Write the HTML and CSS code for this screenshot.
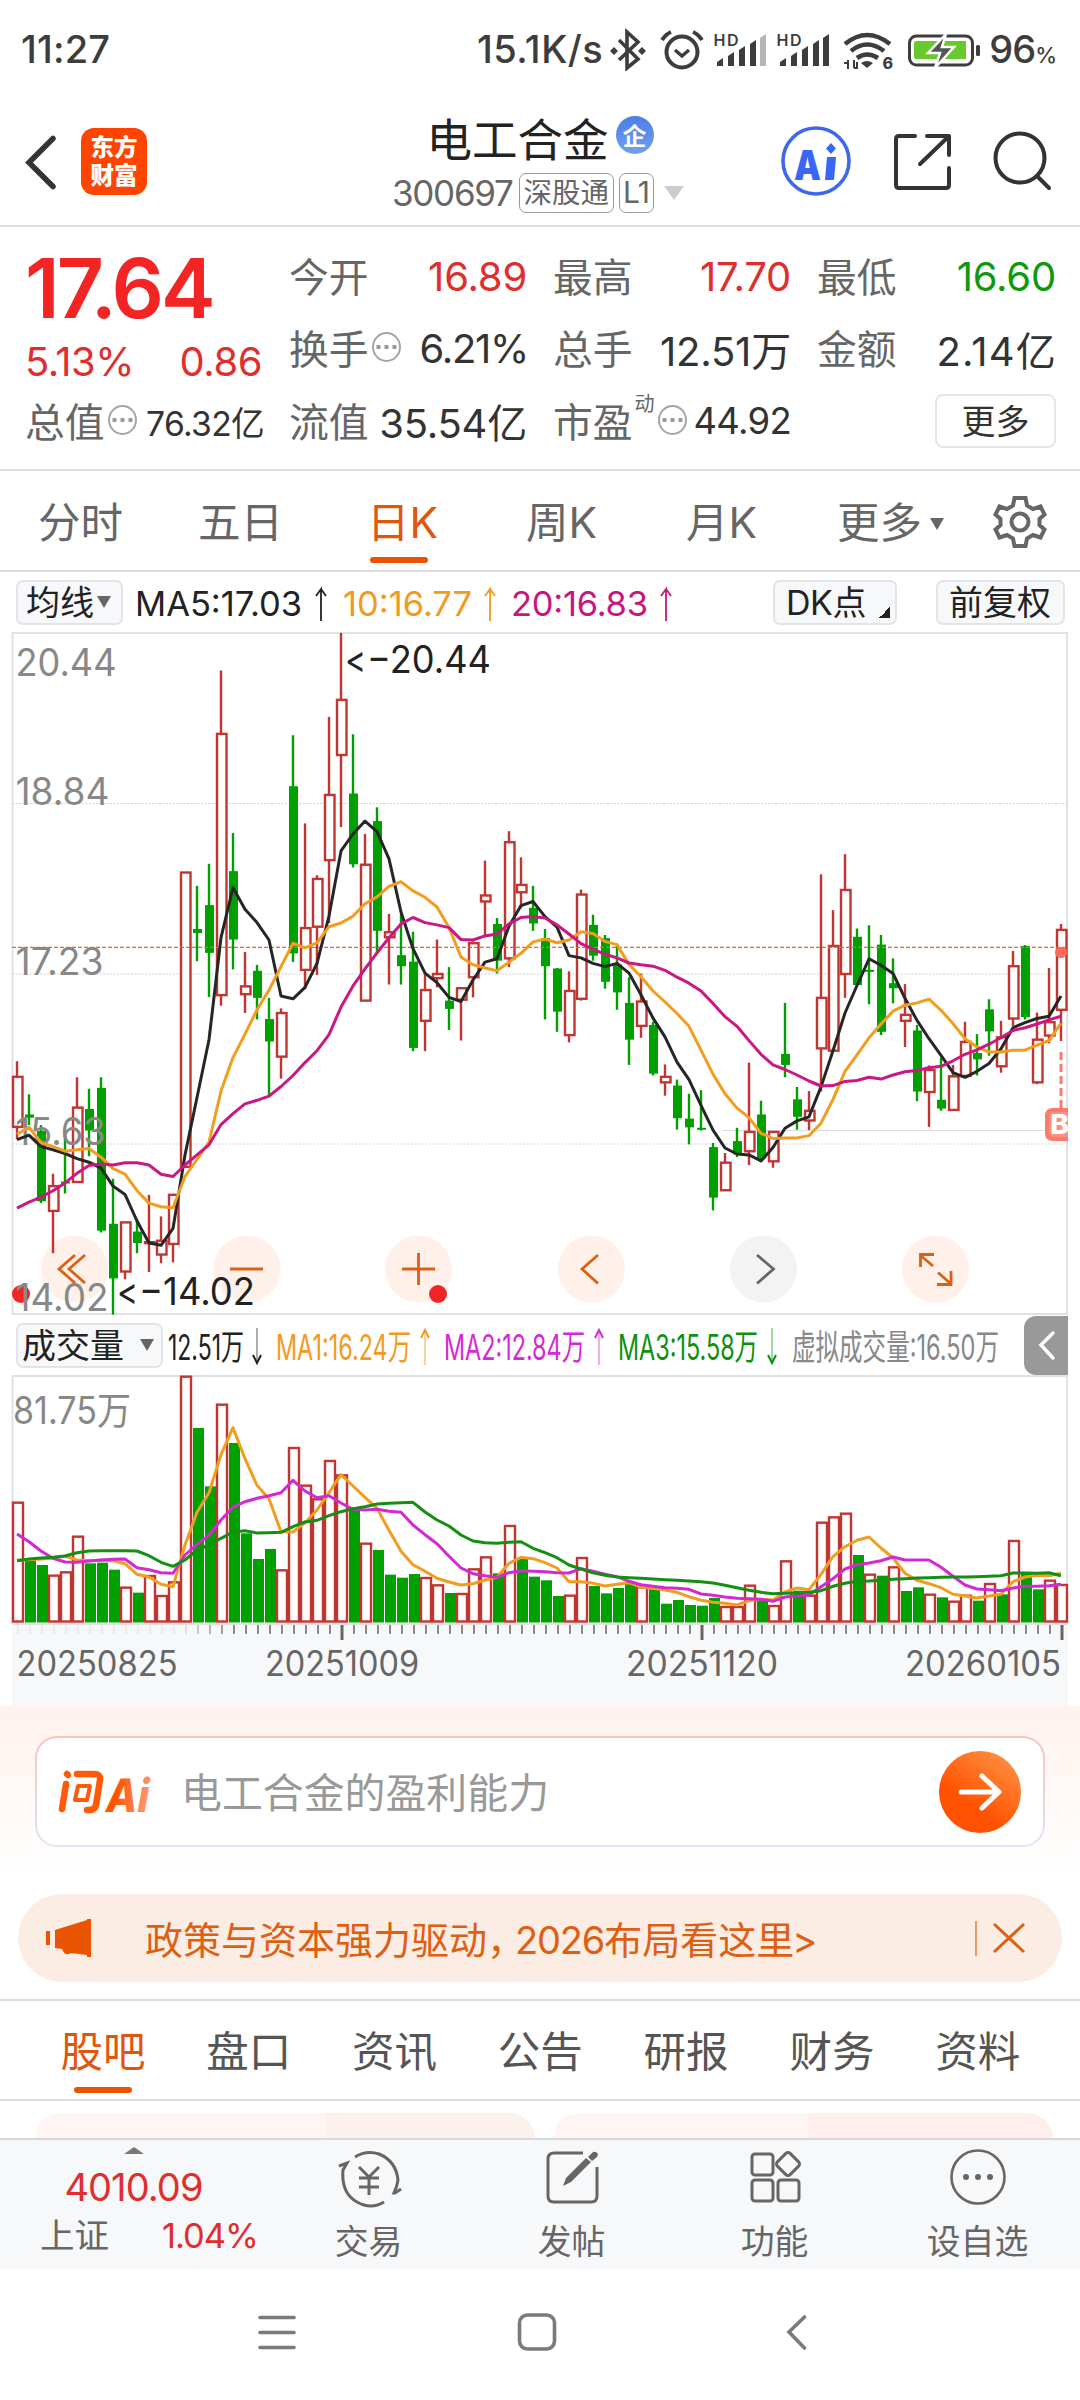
FILE: index.html
```html
<!DOCTYPE html>
<html lang="zh-CN">
<head>
<meta charset="utf-8">
<title>电工合金 300697</title>
<link rel="stylesheet" href="styles.css">
</head>
<body>
<div class="status">
  <span class="time">11:27</span>
  <span class="speed">15.1K/s</span>
  <svg class="status-icons" width="372" height="44" viewBox="610 25 372 44" fill="none" stroke="#3d3d3d">
    <path d="M619 38L638 57L627 66V30L638 40L619 58" stroke-width="3.6"/>
    <path d="M610 49l4-4l4 4l-4 4zM638 49l4-4l4 4l-4 4z" fill="#3d3d3d" stroke="none"/>
    <circle cx="682" cy="50" r="15.5" stroke-width="4"/>
    <path d="M675 48l7 6l7-6" stroke-width="3.4"/>
    <path d="M662 38q4-6 9-8M702 38q-4-6-9-8" stroke-width="4"/>
    <g fill="#3d3d3d" stroke="none">
      <text class="hd" x="713.5" y="43.5" textLength="25">HD</text>
      <text class="hd" x="776.5" y="43.5" textLength="25">HD</text>
      <path d="M717 64v-4l6-4v8zM728 64V54l6-4v14zM739 64V48l6-4v20zM750 64V42l6-4v26z"/>
      <path d="M760 64V36l6-4v32z" fill="#b5b5b5"/>
      <path d="M780 64v-4l6-4v8zM791 64V54l6-4v14zM802 64V48l6-4v20zM813 64V42l6-4v26zM823 64V36l6-4v32z"/>
      <path d="M867 66l-6-5q6-4 12 0z"/>
      <text class="six" x="882.5" y="67">6</text>
    </g>
    <path d="M845 42q22-18 45 0M851 49q16-13 33 0M857 56q10-7 21 0" stroke-width="4.6"/>
    <path d="M844 61h4V58M848 58v9M854 66v-8M854 66h3M857 60v7" stroke-width="2"/>
    <rect x="909.500" y="34" width="63" height="29" rx="7" stroke-width="3"/>
    <path d="M914 41q0-2 2-2h50v18h-50q-2 0-2-2z" fill="#67c92b" stroke="none"/>
    <path d="M946 32L928 51h12l-5 15L954 45H942z" fill="#555" stroke="#fff" stroke-width="2.500"/>
    <rect x="976" y="43" width="4" height="11" rx="1.500" fill="#3d3d3d" stroke="none"/>
  </svg>
  <span class="battery">96<small>%</small></span>
</div>

<header class="header">
  <svg class="back" width="40" height="60" viewBox="20 131 40 60"><path d="M53 137.500L29 161.500L53 185.500" fill="none" stroke="#333" stroke-width="5.500" stroke-linecap="round"/></svg>
  <div class="brand">东方<br>财富</div>
  <div class="title">
    <div class="name">电工合金<i class="corp">企</i></div>
    <div class="code"><b>300697</b><span>深股通</span><span class="lv">L1</span><i class="caret"></i></div>
  </div>
  <svg class="actions" width="280" height="76" viewBox="775 123 280 76" fill="none" stroke="#333" stroke-width="4">
    <circle cx="816" cy="160" r="33" stroke="#3d68ea" stroke-width="3.600"/>
    <g fill="#3a66f5" stroke="none">
      <text class="ai-text" x="794" y="179" textLength="27" lengthAdjust="spacingAndGlyphs">A</text>
      <path d="M827 156h9l-2 23h-9zM831 142l5 5.500l-5 5.500l-5-5.500z"/>
    </g>
    <path d="M915 135h-16q-3 0-3 3v46q0 3 3 3h47q3 0 3-3v-17M927 135h22v19M947 137L920 163" stroke-linejoin="round" stroke-linecap="round"/>
    <circle cx="1020" cy="157" r="24.500"/><path d="M1037 175l12 12" stroke-linecap="round"/>
  </svg>
</header>

<section class="quote">
  <div class="last">
    <div class="price">17.64</div>
    <div class="pair red"><span>5.13%</span><span>0.86</span></div>
    <div class="cell"><label>总值</label><i class="dots"></i><em class="s34">76.32亿</em></div>
  </div>
  <div class="grid">
    <div class="cell"><label>今开</label><em class="red">16.89</em></div>
    <div class="cell"><label>最高</label><em class="red">17.70</em></div>
    <div class="cell"><label>最低</label><em class="green">16.60</em></div>
    <div class="cell"><label>换手</label><i class="dots"></i><em class="tight">6.21%</em></div>
    <div class="cell"><label>总手</label><em>12.51万</em></div>
    <div class="cell"><label>金额</label><em class="loose">2.14亿</em></div>
    <div class="cell"><label>流值</label><em>35.54亿</em></div>
    <div class="cell"><label>市盈</label><sup>动</sup><i class="dots"></i><em class="s36">44.92</em></div>
    <div class="cell end"><span class="more">更多</span></div>
  </div>
</section>

<nav class="periods">
  <span>分时</span><span>五日</span><span class="on">日K</span><span>周K</span><span>月K</span><span class="drop">更多<i></i></span>
  <svg width="54" height="56" viewBox="-27 -28 54 56" fill="none" stroke="#666" stroke-width="4">
    <path d="M-5.500-24h11l1.500 7.500l6 3.500l7.500-2.500l4 8l-5 4.500v6l5 4.500l-4 8l-7.500-2.500l-6 3.500l-1.500 7.500h-11l-1.500-7.500l-6-3.500l-7.500 2.500l-4-8l5-4.500v-6l-5-4.500l4-8l7.500 2.500l6-3.500z"/>
    <circle r="8.500"/>
  </svg>
</nav>

<div class="legend">
  <span class="chip avg">均线<i></i></span>
  <svg class="ma" width="550" height="60" viewBox="130 572 550 60">
    <g class="t35">
      <text x="135" y="616" textLength="167" fill="#222">MA5:17.03</text>
      <text x="343" y="616" textLength="129" fill="#f29a1d">10:16.77</text>
      <text x="511" y="616" textLength="137" fill="#c8157f">20:16.83</text>
    </g>
    <g fill="none" stroke-width="1.800">
      <path d="M321 621V589l-5 7M321 589l5 7" stroke="#222"/>
      <path d="M490 621V589l-5 7M490 589l5 7" stroke="#f29a1d"/>
      <path d="M666 621V589l-5 7M666 589l5 7" stroke="#c8157f"/>
    </g>
  </svg>
  <span class="chip dk">DK点<i></i></span>
  <span class="chip fq">前复权</span>
</div>

<svg class="chart" id="kline" width="1080" height="683" viewBox="0 632 1080 683"></svg>

<div class="legend vol-legend">
  <span class="chip vol">成交量<i></i></span>
  <svg width="846" height="60" viewBox="165 1315 846 60">
    <g class="t36">
      <text x="168" y="1360" textLength="76" lengthAdjust="spacingAndGlyphs" fill="#222">12.51万</text>
      <text x="276" y="1360" textLength="135" lengthAdjust="spacingAndGlyphs" fill="#f29a1d">MA1:16.24万</text>
      <text x="444" y="1360" textLength="141" lengthAdjust="spacingAndGlyphs" fill="#d529d5">MA2:12.84万</text>
      <text x="618" y="1360" textLength="140" lengthAdjust="spacingAndGlyphs" fill="#0d910d">MA3:15.58万</text>
      <text x="792" y="1360" textLength="207" lengthAdjust="spacingAndGlyphs" fill="#888">虚拟成交量:16.50万</text>
    </g>
    <g fill="none" stroke-width="1.200">
      <path d="M257 1328v35" stroke="#777"/><path d="M253 1355l4 8l4-8" stroke="#222" stroke-width="2"/>
      <path d="M425 1365v-35" stroke="#f5b65a"/><path d="M421 1338l4-8l4 8" stroke="#f29a1d" stroke-width="2"/>
      <path d="M599 1365v-35" stroke="#e37be3"/><path d="M595 1338l4-8l4 8" stroke="#d529d5" stroke-width="2"/>
      <path d="M772 1328v35" stroke="#66b866"/><path d="M768 1355l4 8l4-8" stroke="#0d910d" stroke-width="2"/>
    </g>
  </svg>
  <span class="fold"><svg width="44" height="59" viewBox="1024 1316 44 59"><path d="M1053 1333l-12 12l12 13" fill="none" stroke="#fff" stroke-width="3.500" stroke-linecap="round"/></svg></span>
</div>

<svg class="chart" id="volume" width="1080" height="331" viewBox="0 1375 1080 331"></svg>

<section class="ask">
  <div class="ask-box">
    <svg width="98" height="46" viewBox="57 1769 98 46" fill="none" stroke="#ff5a0a" stroke-width="6.500" stroke-linejoin="round" stroke-linecap="round">
      <defs><linearGradient id="fade" x1="0" y1="0" x2="1" y2="0"><stop offset=".2" stop-color="#ff5500"/><stop offset="1" stop-color="#ff9a72"/></linearGradient></defs>
      <path d="M66 1784L62 1809M67 1774l1 1M77 1774h17q7 0 6 6l-4 25q-1 5-7 5h-2"/>
      <path d="M78 1786h12l-3 14h-12z" stroke-width="4"/>
      <g transform="translate(104 1812) skewX(-10)"><text class="ask-ai" textLength="43" lengthAdjust="spacingAndGlyphs" x="0" y="0">Ai</text></g>
    </svg>
    <span class="hint">电工合金的盈利能力</span>
    <span class="go"><svg width="82" height="82" viewBox="-41 -41 82 82"><path d="M-19 0H18M2-16L19 0L2 16" fill="none" stroke="#fff" stroke-width="5" stroke-linecap="round" stroke-linejoin="round"/></svg></span>
  </div>
</section>

<div class="notice">
  <svg width="46" height="42" viewBox="46 1917 46 42" fill="#ea5504"><path d="M46 1931h4v14h-4zM55 1930L87 1920v-1h4v38h-4v-2l-16-2q-6 4-9-4l-7-1z"/></svg>
  <span class="notice-text">政策与资本强力驱动<span class="comma">，</span><span class="latin">2026</span>布局看这里<span class="gt">&gt;</span></span>
  <svg width="52" height="38" viewBox="975 1919 52 38" fill="none" stroke="#dd6014"><path d="M976 1921v35" stroke-width="1.200"/><path d="M994 1924l30 28M1024 1924l-30 28" stroke-width="3"/></svg>
</div>

<nav class="topics"><span class="on">股吧</span><span>盘口</span><span>资讯</span><span>公告</span><span>研报</span><span>财务</span><span>资料</span></nav>
<div class="cards"><i></i><i></i></div>

<footer class="dock">
  <div class="index">
    <i class="up"></i>
    <b>4010.09</b>
    <div class="idx-row"><label>上证</label><em>1.04%</em></div>
  </div>
  <div class="tool"><svg width="66" height="62" viewBox="336 2146 66 62" fill="none" stroke="#666" stroke-width="3"><path d="M355 2157q11-7 24-3q17 7 19 26q-1 7-4 13l1 0l6-4M384 2202q-13 8-27 0q-16-9-14-32l4-7l-8 3"/><path d="M359 2167l10 10l10-10M369 2177v18M359 2178h20M359 2187h20"/></svg>交易</div>
  <div class="tool"><svg width="66" height="62" viewBox="539 2146 66 62" fill="none" stroke="#666" stroke-width="3"><path d="M583 2153h-29q-6 0-6 6v37q0 6 6 6h37q6 0 6-6v-29"/><path d="M563 2186l3-8l20-20l5 4l-20 20zM588 2157l5-5q3-1 5 2l-1 3l-5 4z" fill="#666" stroke="none"/></svg>发帖</div>
  <div class="tool"><svg width="66" height="62" viewBox="742 2146 66 62" fill="none" stroke="#666" stroke-width="3"><rect x="752" y="2154" width="21" height="21" rx="3"/><rect x="752" y="2180" width="21" height="21" rx="3"/><rect x="778" y="2180" width="21" height="21" rx="3"/><rect x="779" y="2155" width="18" height="18" rx="3" transform="rotate(45 788 2164)"/></svg>功能</div>
  <div class="tool"><svg width="66" height="62" viewBox="945 2146 66 62" fill="none" stroke="#666" stroke-width="2.600"><circle cx="978" cy="2177" r="26.500"/><g fill="#666" stroke="none"><circle cx="966" cy="2177" r="3"/><circle cx="978" cy="2177" r="3"/><circle cx="990" cy="2177" r="3"/></g></svg>设自选</div>
</footer>

<svg class="sysnav" width="1080" height="130" viewBox="0 2270 1080 130" fill="none" stroke="#7a7a7a" stroke-width="3.600" stroke-linecap="round">
  <path d="M260 2317.500h34M260 2332.500h34M260 2347.500h34"/>
  <rect x="519.500" y="2315" width="35" height="34" rx="8"/>
  <path d="M804.500 2317L789 2332l15.500 16"/>
</svg>
<script src="chart.js"></script>
</body>
</html>
```
FILE: styles.css
```css
* { box-sizing: border-box; }
body {
  margin: 0;
  width: 1080px;
  height: 2400px;
  overflow: hidden;
  background: #fff;
  color: #333;
  font-family: Inter, "Noto Sans CJK SC", sans-serif;
  font-variant-ligatures: none;
  font-feature-settings: "calt" 0;
}
svg { display: block; flex: none; }
i, em { font-style: normal; }
.red { color: #e02d2d; }
.green { color: #0d980d; }

/* status bar */
.status { display: flex; align-items: center; height: 98px; padding: 0 24px 0 21px; color: #3d3d3d; font-size: 38px; font-weight: 500; }
.time { letter-spacing: .200px; }
.speed { margin-left: auto; font-size: 38px; letter-spacing: .500px; margin-right: 7px; }
.status-icons { margin-top: -1px; }
.battery { margin-left: 7px; letter-spacing: -1px; }
.battery small { font-size: 22px; }
.hd { font: 600 16px Inter, sans-serif; }
.six { font: 800 16px Inter, sans-serif; }

/* header */
.header { display: flex; align-items: center; height: 129px; border-bottom: 2px solid #dcdcdc; padding: 0 25px 0 20px; }
.brand { width: 66px; height: 67px; margin-left: 21px; border-radius: 13px; background: #ff4400; color: #fff; font: 900 23.500px/28px "Noto Sans CJK SC", sans-serif; text-align: center; padding-top: 4px; }
.title { width: 296px; margin-left: 245px; margin-top: 14px; }
.name { display: flex; align-items: center; justify-content: center; height: 48px; font-size: 45.500px; color: #222; }
.corp { width: 38px; height: 38px; margin: -4px 0 0 7px; border-radius: 50%; background: linear-gradient(#4c7de8, #71a0ee); color: #fff; font: 700 24px/37px "Noto Sans CJK SC", sans-serif; text-align: center; }
.code { display: flex; align-items: center; height: 64px; font-size: 35px; color: #666; }
.code b { font-weight: 400; letter-spacing: -1.300px; margin-right: 6px; }
.code span { height: 40px; border: 1.500px solid #999; border-radius: 7px; padding: 0 4px; font-size: 28.500px; line-height: 37px; margin-right: 5px; }
.code .lv { width: 35px; font-size: 30px; padding: 0 3px; letter-spacing: -1px; }
.caret { margin-left: 5px; border: 10.500px solid transparent; border-top: 14px solid #ccc; border-bottom: 0; }
.actions { margin-left: auto; }
.ai-text { font: 900 41px Inter, sans-serif; }

/* quote */
.quote { display: flex; height: 244px; border-bottom: 2px solid #dcdcdc; padding: 14px 24px 0 25px; font-size: 40px; }
.last { width: 237px; margin-right: 27px; }
.price { height: 87px; font-size: 82px; line-height: 95px; font-weight: 600; color: #f32424; letter-spacing: -3px; margin-bottom: -8px; }
.pair { display: flex; justify-content: space-between; height: 66px; line-height: 83px; letter-spacing: -.500px; }
.grid { display: grid; grid-template-columns: 238px 238px 239px; column-gap: 26px; grid-auto-rows: 72.500px; }
.cell { display: flex; align-items: center; height: 72px; white-space: nowrap; letter-spacing: -.200px; }
.cell label { color: #666; font-size: 39.800px; letter-spacing: 0; margin-top: -6px; }
.cell em { margin-left: auto; margin-top: -2px; }
.cell .s34 { font-size: 33.700px; letter-spacing: -.700px; margin-right: -2px; }
.cell .s36 { font-size: 36.500px; letter-spacing: -.700px; }
.cell .tight { letter-spacing: -1.300px; margin-right: -1px; }
.cell .loose { letter-spacing: 1.200px; margin-right: -1px; }
.cell sup { align-self: flex-start; color: #666; font-size: 20px; line-height: 24px; padding: 6px 1px 0 2px; }
.dots { width: 29px; height: 30px; margin: -5px 0 0 3px; border: 2px solid #a5a5a5; border-radius: 50%; background: radial-gradient(circle, #999 2px, transparent 2.600px) 50% 50% / 8px 8px; background-clip: content-box; padding: 9px 0; background-repeat: repeat-x; }
.end { justify-content: flex-end; }
.more { width: 121px; height: 54px; border: 2px solid #e6e6e6; border-radius: 8px; text-align: center; font-size: 34px; line-height: 51px; letter-spacing: 0; margin-top: -2px; }

/* period tabs */
.periods { display: flex; align-items: center; height: 101px; padding: 2px 33px 0 38px; border-bottom: 2px solid #dcdcdc; font-size: 42.500px; color: #666; }
.periods span { position: relative; width: 160px; white-space: nowrap; height: 99px; line-height: 101px; }
.periods span:nth-child(2) { width: 169px; }
.periods span:nth-child(3) { width: 159px; }
.periods span:nth-child(5) { width: 151px; }
.periods .on, .topics .on { color: #e0560d; }
.on::after { content: ""; position: absolute; left: 3px; top: 85px; width: 58px; height: 6px; border-radius: 3px; background: #e85404; }
.periods .drop i { display: inline-block; margin: 0 0 8px 8px; border: 7.500px solid transparent; border-top: 12px solid #666; border-bottom: 0; }
.periods svg { margin-left: auto; }
.periods .drop { width: 112px; }

/* legends */
.legend { display: flex; align-items: center; height: 60px; padding-left: 16px; }
.chip { display: flex; align-items: center; height: 45px; flex: none; background: #f7f8fa; border: 2px solid #e2e4e9; border-radius: 7px; font-size: 34px; line-height: 41px; color: #222; white-space: nowrap; }
.chip i { border: 7.500px solid transparent; border-top: 12px solid #666; border-bottom: 0; }
.avg { width: 107px; padding-left: 8px; margin-right: 7px; }
.avg i { margin-left: 3px; }
.dk { width: 124px; padding-left: 11px; margin-left: 93px; letter-spacing: -.500px; }
.dk i { border: 0; width: 11px; height: 11px; background: linear-gradient(135deg, transparent 50%, #222 50%); margin: 20px 0 0 13px; }
.fq { width: 129px; padding-left: 11px; margin-left: 39px; }
.t35 { font: 400 34.500px Inter, sans-serif; }
.t36 { font: 400 35px Inter, "Noto Sans CJK SC", sans-serif; }
.vol { width: 147px; padding-left: 4px; margin-right: 2px; }
.vol i { margin-left: 16px; }
.fold { margin-left: 13px; background: #999; border-radius: 12px 0 0 12px; }

/* charts */
.up-bar { fill: #fff; stroke: #c23530; stroke-width: 2.400; }
.down-bar { fill: #00a000; }
.up-wick { stroke: #c23530; stroke-width: 2.400; }
.down-wick { stroke: #00a000; stroke-width: 2.400; }
.line { fill: none; stroke-width: 3; stroke-linejoin: round; }
.scale { font: 400 38px Inter, "Noto Sans CJK SC", sans-serif; fill: #888; }
.mark { font: 400 38px Inter, sans-serif; fill: #222; }
.date { font: 400 35px Inter, sans-serif; fill: #666; }

/* assistant */
.ask { height: 172px; padding: 30px 35px 0; background: linear-gradient(#fff2ee, #fff); }
.ask-box { display: flex; align-items: center; height: 111px; border: 2px solid transparent; border-radius: 22px; padding: 0 22px 0 20px; background: linear-gradient(#fff, #fff) padding-box, linear-gradient(#f9c3ba, #dce6f5) border-box; }
.ask-ai { font: 800 46px Inter, sans-serif; fill: url(#fade); stroke: none; }
.hint { margin: -3px 0 0 26px; font-size: 40.900px; color: #999; }
.go { margin-left: auto; width: 82px; height: 82px; border-radius: 50%; background: linear-gradient(35deg, #ff5200 35%, #ff9a4d); }

/* notice */
.notice { display: flex; align-items: center; height: 88px; margin: 16px 18px 17px; padding: 0 35px 0 28px; border-radius: 44px; background: #fcede4; }
.notice-text { margin: -2px auto 0 53px; color: #de5f12; font-size: 38px; white-space: nowrap; }
.comma { margin-right: -10px; }
.latin { letter-spacing: -1.200px; }
.gt { margin-left: -2px; }

/* topic tabs */
.topics { display: flex; height: 102px; padding: 0 29px 0 30px; border-top: 2px solid #dcdcdc; border-bottom: 2px solid #dcdcdc; font-size: 42.500px; line-height: 101px; color: #555; }
.topics span { position: relative; width: 145.800px; text-align: center; }
.topics .on::after { left: 44px; top: 86px; }
.cards { display: flex; gap: 18px; height: 37px; padding: 12px 27px 0 35px; }
.cards i { flex: 1; border-radius: 28px 28px 0 0; background: linear-gradient(90deg, #fff6f3 58%, #fdf1ee 58%); }
.cards i + i { background: linear-gradient(90deg, #fff5f2 51%, #feefec 51%); }

/* bottom dock */
.dock { display: flex; height: 132px; background: #f7f8fa; border-top: 2px solid #d8d8da; color: #666; }
.index { width: 267px; display: flex; flex-direction: column; align-items: center; color: #e02d2d; }
.up { margin-top: 7px; border: 10px solid transparent; border-bottom: 7px solid #777; border-top: 0; }
.index b { font-weight: 400; font-size: 38px; line-height: 46px; margin-top: 10px; letter-spacing: -.900px; }
.idx-row { display: flex; width: 267px; padding: 0 9px 0 40px; justify-content: space-between; font-size: 34.500px; line-height: 51px; letter-spacing: -1px; }
.idx-row label { color: #666; letter-spacing: 0; }
.tool { width: 203px; display: flex; flex-direction: column; align-items: center; font-size: 33.800px; line-height: 46px; padding-top: 6px; gap: 11px; }
```
FILE: chart.js
```js
const NS = 'http://www.w3.org/2000/svg';
const X0 = 17, STEP = 12;

function add(svg, tag, attrs, text) {
  const el = document.createElementNS(NS, tag);
  for (const k in attrs) el.setAttribute(k, attrs[k]);
  if (text) el.textContent = text;
  svg.appendChild(el);
  return el;
}
const x = i => X0 + STEP * i;
function label(svg, cls, s, left, base, width) {
  add(svg, 'text', { class: cls, x: left, y: base, textLength: width, lengthAdjust: 'spacingAndGlyphs' }, s);
}
function line(svg, values, y, color) {
  add(svg, 'polyline', { class: 'line', stroke: color, points: values.map((v, i) => x(i) + ',' + y(v).toFixed(1)).join(' ') });
}

/* r = rise, g = fall; high, body top, body bottom, low */
const candles = `r961,995,1104,1131 g1033,1077,1084,1100 g1100,1113,1266,1270 r1206,1233,1287,1379 g1122,1223,1226,1249
r996,1062,1224,1224 g1021,1065,1112,1168 g996,1019,1330,1334 g1217,1315,1434,1513 r1312,1312,1419,1436
g1305,1332,1357,1379 r1252,1355,1357,1420 r1299,1352,1382,1401 r1250,1252,1359,1399 r549,550,1191,1191
g579,673,682,743 g531,621,725,821 r110,248,817,840 g464,547,696,761 r723,798,815,856
g751,764,823,870 g823,869,918,1035 r846,856,951,999 g251,362,726,745 r443,671,762,804
r556,564,668,773 r211,381,523,660 r28,174,294,451 g249,378,532,539 r466,533,829,829
g408,438,677,728 r640,680,691,794 g640,730,754,794 g679,744,932,939 r770,806,873,939
r696,771,780,800 g756,829,847,893 r802,802,827,916 r700,704,778,822 r524,600,613,690
g649,662,742,770 r460,484,737,756 r517,577,593,628 g579,627,661,677 g673,693,754,870
g758,759,853,897 r765,808,904,920 r587,598,825,829 g642,664,731,742 g686,693,788,803
g705,750,811,849 g778,834,914,969 r770,831,884,910 g875,882,988,992 r968,995,1007,1036
g1001,1014,1085,1110 g1032,1086,1105,1142 g1024,1106,1110,1112 g1139,1148,1258,1286 r1161,1182,1242,1242
g1106,1135,1164,1170 r964,1115,1157,1187 g1047,1077,1173,1177 r1115,1115,1179,1193 g834,945,969,996
g1017,1044,1082,1110 r1026,1069,1090,1111 r554,823,933,1027 r632,710,938,938 r510,588,771,823
g672,690,795,797 g665,762,766,837 g686,707,897,904 g737,791,802,835 r793,860,873,930
g882,894,1027,1048 r970,980,1028,1104 g953,1045,1064,1069 r969,994,1067,1067 r875,919,993,993
g902,943,957,992 g826,848,896,949 r873,909,972,986 r721,754,868,884 g708,710,865,870
r855,914,1007,1011 r758,876,905,922 r662,675,849,917`.split(/\s+/);

const ma5 = [1132,1122,1147,1154,1162,1173,1181,1194,1233,1251,1309,1357,1362,1325,1165,1040,914,692,583,630,659,697,819,825,800,748,645,503,466,438,461,520,636,716,769,790,822,831,784,745,738,667,622,613,646,669,731,736,748,755,748,769,816,867,908,963,1001,1057,1111,1150,1163,1165,1178,1149,1107,1091,1082,1017,938,856,796,738,752,770,824,872,912,948,986,996,983,966,934,888,877,868,863,819];
const ma10 = [1120,1105,1138,1147,1157,1154,1151,1170,1195,1207,1243,1270,1278,1280,1212,1175,1137,1026,953,902,849,806,755,704,714,703,668,660,645,618,603,580,570,590,604,625,670,734,751,758,764,745,726,701,695,703,697,679,683,700,707,750,777,808,832,857,885,937,989,1032,1063,1084,1118,1129,1128,1128,1123,1096,1044,983,947,910,880,852,839,834,826,850,879,912,930,941,941,937,937,926,916,878];
const ma20 = [1281,1268,1257,1243,1226,1205,1188,1185,1187,1182,1182,1187,1207,1212,1187,1165,1143,1099,1075,1054,1046,1037,1016,992,964,938,903,843,797,760,725,692,662,648,659,664,670,696,697,688,684,662,648,646,649,664,684,705,717,728,736,747,751,754,763,778,791,808,835,864,885,916,946,969,979,991,1004,1015,1014,1005,1003,996,1000,991,984,981,975,972,960,946,936,924,910,894,888,880,871,863];

const k = document.getElementById('kline');
const ky = v => 620 + v / 2.178;

add(k, 'rect', { x: 12.5, y: 633, width: 1054.5, height: 681, fill: 'none', stroke: '#e2e2e4', 'stroke-width': 2 });
[803.5, 974, 1144].forEach(y => add(k, 'path', { d: `M12 ${y}H1067`, stroke: '#d2d2d2', 'stroke-width': 1, 'stroke-dasharray': '2 1.5' }));
add(k, 'path', { d: 'M722 1130.5H1045', stroke: '#dcdcdc', 'stroke-width': 1 });
[74.5, 247, 418.5, 591.5, 763.5, 935.5].forEach((c, i) => add(k, 'circle', { cx: c, cy: 1269, r: 33.5, fill: i === 4 ? '#f3f3f3' : '#fff1ea' }));

candles.forEach((c, i) => {
  const [hi, top, bot, lo] = c.slice(1).split(',').map(v => ky(+v));
  const dir = c[0] === 'r' ? 'up' : 'down';
  add(k, 'path', { class: dir + '-wick', d: `M${x(i)} ${hi}V${lo}` });
  if (dir === 'up') add(k, 'rect', { class: 'up-bar', x: x(i) - 4, y: top, width: 9.5, height: bot - top });
  else add(k, 'rect', { class: 'down-bar', x: x(i) - 4, y: top, width: 9, height: Math.max(2, bot - top) });
});
add(k, 'path', { d: 'M12 947.4H1067', stroke: '#d9702f', 'stroke-width': 1.3, 'stroke-dasharray': '4 2' });
add(k, 'circle', { cx: 21, cy: 1294, r: 9, fill: '#f12525' });
add(k, 'circle', { cx: 438, cy: 1294, r: 9, fill: '#f12525' });
label(k, 'scale', '20.44', 15.5, 675.5, 101);
label(k, 'scale', '18.84', 15.5, 804.5, 94);
label(k, 'scale', '17.23', 15.5, 974.5, 88);
label(k, 'scale', '15.63', 15.5, 1144.5, 90);
label(k, 'scale', '14.02', 15.5, 1310.5, 93);
label(k, 'mark', '<', 345, 673, 21);
label(k, 'mark', '−20.44', 367, 673, 124);
label(k, 'mark', '<', 117, 1304.5, 21);
label(k, 'mark', '−14.02', 139, 1304.5, 116);
line(k, ma5, ky, '#262626');
line(k, ma10, ky, '#f29d1f');
line(k, ma20, ky, '#cb1784');

/* chart controls */
const icon = (d, color) => add(k, 'path', { d, fill: 'none', stroke: color || '#dd5f16', 'stroke-width': 2.8 });
icon('M75 1255L59 1269L75 1283M85 1255L69 1269L85 1283');
icon('M230 1269H263');
icon('M402 1269H435M418.500 1253V1285');
icon('M598 1255L582 1269L598 1283.500');
icon('M757 1255L773.500 1269L757 1283.500', '#666');
icon('M933 1266L920 1255M934 1254.500H920.500V1267M938 1272.500L951 1284M937 1284.500H951V1271');

/* buy marker */
add(k, 'ellipse', { cx: 1061, cy: 952.5, rx: 6, ry: 5.5, fill: '#fb6a5a' });
add(k, 'path', { d: 'M1061 1052V1108', stroke: '#fb7a6b', 'stroke-width': 3, 'stroke-dasharray': '8 4' });
add(k, 'path', { d: 'M1068 1108H1053q-8 0-8 8V1133q0 8 8 8H1068z', fill: '#fb7a6b' });
add(k, 'path', { d: 'M1068 1112H1053q-4 0-4 4V1133q0 4 4 4H1068z', fill: '#fb8f82' });
add(k, 'text', { x: 1050, y: 1134, fill: '#fff', 'font-family': 'Inter', 'font-weight': 800, 'font-size': 27, textLength: 19, lengthAdjust: 'spacingAndGlyphs' }, 'B');
add(k, 'rect', { x: 1068, y: 1100, width: 12, height: 50, fill: '#fff' });

/* volume */
const v = document.getElementById('volume');
const vy = n => 1310 + n / 3;
const bars = `r578 g752 g765 r797 r787 r680 g760 g758 g779 r833 g848 r798 r858 r817 r200 g354 g529 r284 g399 g670 g747 g717
r781 r414 r527 r568 r453 r496 g597 r701 g720 g794 g803 g792 r804 r826 g849 r852 r778 r742 g790 r648 g747 g800
g811 g858 r857 r744 g828 g850 g834 g822 r832 g838 g881 g870 g885 g887 g864 r891 r891 r827 g864 r888 r754 g842
r857 r638 r622 r611 g735 r794 g797 r772 g843 g832 r854 g862 r875 r857 g872 r822 g853 r693 g786 g838 r812 r825`.split(/\s+/);
const vma1 = [751,749,747,745,738,750,752,751,752,761,793,801,823,830,705,607,548,434,353,446,526,566,665,666,638,600,548,494,528,562,595,661,724,764,784,805,816,825,821,810,802,760,742,746,758,774,815,815,820,828,823,818,832,835,840,847,860,871,877,880,885,872,868,870,846,834,839,793,740,710,691,681,714,744,790,811,821,833,853,858,864,858,853,815,801,796,797,790];
const vma2 = [672,695,723,745,756,757,753,750,748,747,773,779,788,790,735,703,676,630,592,575,565,557,548,511,543,563,557,579,598,600,598,604,607,645,674,701,739,774,791,797,802,788,782,784,785,788,789,776,784,793,800,814,824,829,833,835,838,852,856,861,865,866,868,874,861,858,854,830,806,777,764,759,752,741,750,750,750,772,799,825,837,839,842,834,829,829,827,823];
const vma3 = [752,747,744,742,738,728,723,722,722,722,723,737,757,769,750,720,705,685,666,662,669,668,667,650,636,631,617,605,596,590,582,580,578,577,606,630,648,675,693,698,700,697,695,715,728,743,765,777,788,796,801,803,805,807,809,811,813,815,819,826,833,841,847,851,850,849,847,842,829,820,814,813,811,808,806,804,803,802,801,801,800,799,797,789,789,790,788,797];

add(v, 'rect', { x: 12, y: 1623, width: 1056, height: 83, fill: '#f7f8fa' });
add(v, 'path', { d: 'M12.5 1624V1376H1067V1624Z', fill: 'none', stroke: '#e2e2e4', 'stroke-width': 2 });
bars.forEach((b, i) => {
  const top = vy(+b.slice(1));
  if (b[0] === 'r') add(v, 'rect', { class: 'up-bar', x: x(i) - 4, y: top, width: 10, height: 1621.5 - top });
  else add(v, 'rect', { class: 'down-bar', x: x(i) - 4, y: top, width: 11, height: 1622.5 - top });
  const big = i === 27 || i === 57 || i === 87;
  const opacity = i < 14 ? 0.12 : i < 18 ? 0.2 + (i - 14) * 0.2 : 1;
  add(v, 'path', { d: `M${x(i) + 1} 1625V${big ? 1640 : 1634}`, stroke: big ? '#666' : '#8a8a8a', 'stroke-width': big ? 3 : 2, opacity });
});
label(v, 'scale', '81.75万', 13, 1424, 118);
line(v, vma1, vy, '#f29d1f');
line(v, vma2, vy, '#d22ad2');
line(v, vma3, vy, '#148f14');
label(v, 'date', '20250825', 16.5, 1676, 161);
label(v, 'date', '20251009', 265, 1676, 154);
label(v, 'date', '20251120', 626, 1676, 152);
label(v, 'date', '20260105', 905, 1676, 156);
```
